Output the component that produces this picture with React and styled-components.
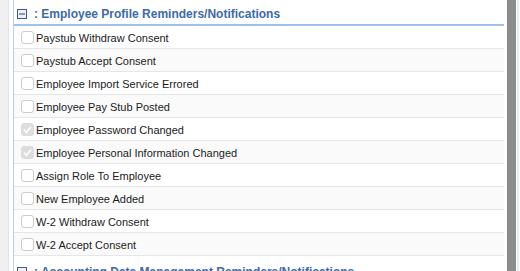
import React from 'react';
import styled, { createGlobalStyle } from 'styled-components';

const GlobalStyle = createGlobalStyle`
    body {
        margin: 0;
        background: #ffffff;
        font-family: "Liberation Sans", Arial, sans-serif;
        overflow: hidden;
    }
`

const sections = [
    {
        title: 'Employee Profile Reminders/Notifications',
        items: [
            { label: 'Paystub Withdraw Consent' },
            { label: 'Paystub Accept Consent' },
            { label: 'Employee Import Service Errored' },
            { label: 'Employee Pay Stub Posted' },
            { label: 'Employee Password Changed', checked: true },
            { label: 'Employee Personal Information Changed', checked: true },
            { label: 'Assign Role To Employee' },
            { label: 'New Employee Added' },
            { label: 'W-2 Withdraw Consent' },
            { label: 'W-2 Accept Consent' },
        ],
    },
    {
        title: 'Accounting Data Management Reminders/Notifications',
        items: [
            { label: 'Journal Entry Posted' },
        ],
    },
]

function CheckBox({ checked }) {
    return (
        <Box checked={checked}>
            {checked &&
                <svg width="11" height="11" viewBox="0 0 11 11">
                    <path d="M2 5.8 L4.4 8.2 L9 2.8" fill="none" stroke="#ffffff" strokeWidth="1.6" />
                </svg>
            }
        </Box>
    )
}

function CollapseIcon() {
    return (
        <svg width="10" height="10" viewBox="0 0 10 10">
            <rect x="0.5" y="0.5" width="9" height="9" fill="#eef2f8" stroke="#3d5a85" />
            <rect x="2" y="4.5" width="6" height="1" fill="#2c4468" />
        </svg>
    )
}

export default function App() {
    return (
        <>
            <GlobalStyle />
            <Page>
                <LeftRail />
                <Panel>
                    {sections.map((s) => (
                        <Section key={s.title}>
                            <Header>
                                <CollapseIcon />
                                <HeaderText>: {s.title}</HeaderText>
                            </Header>
                            {s.items.map((item, i) => (
                                <Row key={item.label} shaded={i % 2 === 1}>
                                    <CheckBox checked={item.checked} />
                                    <Label>{item.label}</Label>
                                </Row>
                            ))}
                        </Section>
                    ))}
                </Panel>
                <Scrollbar />
                <RightEdge />
            </Page>
        </>
    )
}

const Page = styled.div`
    display: flex;
    height: 271px;
    overflow: hidden;
`

const LeftRail = styled.div`
    width: 8px;
    flex-shrink: 0;
    background: #f0f0f0;
    border-right: 1px solid #e2e2e2;
    margin-right: 4px;
`

const Panel = styled.div`
    width: 490px;
    flex-shrink: 0;
    border-left: 1px solid #b9cfec;
    margin-right: 3px;
`

const Section = styled.div`
    margin-bottom: 2px;
`

const Header = styled.div`
    display: flex;
    align-items: center;
    gap: 7px;
    height: 26px;
    padding-left: 3px;
    padding-top: 4px;
    box-sizing: border-box;
    border-bottom: 2px solid #9fc0ea;
`

const HeaderText = styled.span`
    font-weight: bold;
    font-size: 12px;
    color: #3d6aa8;
`

const Row = styled.div`
    display: flex;
    align-items: center;
    height: 22px;
    padding-left: 7px;
    border-bottom: 1px solid #e6e6e6;
    background: ${props => props.shaded ? '#fafafa' : '#ffffff'};
`

const Box = styled.span`
    display: flex;
    align-items: center;
    justify-content: center;
    width: 13px;
    height: 13px;
    box-sizing: border-box;
    border-radius: 3px;
    border: 1px solid ${props => props.checked ? '#dcdcdc' : '#cccccc'};
    background: ${props => props.checked ? '#dedede' : '#ffffff'};
    margin-right: 2px;
`

const Label = styled.span`
    font-size: 11px;
    color: #1a1a1a;
    margin-top: 1px;
`

const Scrollbar = styled.div`
    width: 9px;
    flex-shrink: 0;
    background: #8c8c8c;
`

const RightEdge = styled.div`
    flex: 1;
    background: #ffffff;
    border-right: 2px solid #e4edf9;
    margin-right: 1px;
`
